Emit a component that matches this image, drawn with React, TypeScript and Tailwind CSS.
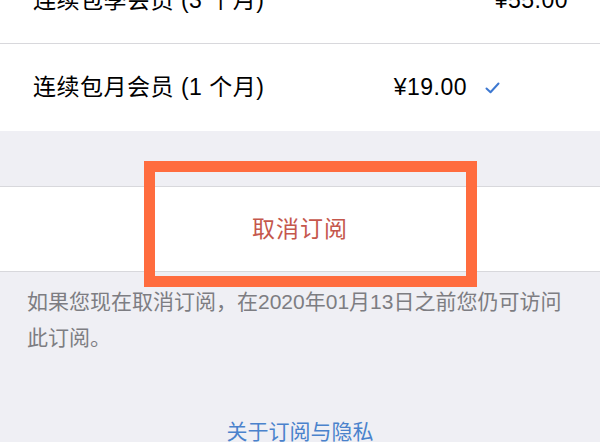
import React from 'react';

const FONT = "font-['Helvetica','Liberation_Sans','Noto_Sans_CJK_SC',sans-serif]";

function Check() {
  return (
    <svg width="15" height="12" viewBox="0 0 15 12" fill="none" className="ml-[18px]">
      <path d="M1.5 6.5 L5.5 10.2 L13.5 1.5" stroke="#3d78d1" strokeWidth="2" strokeLinecap="round" strokeLinejoin="round" />
    </svg>
  );
}

export default function App() {
  return (
    <div className={`relative w-[600px] h-[442px] overflow-hidden bg-[#efeff4] ${FONT}`}>
      {/* plan list, scrolled up a bit */}
      <div className="-mt-[43px] bg-white">
        <div className="h-[87px] flex items-center justify-between pl-[33px] pr-[32px] border-b border-[#d8d8dc] text-[23px] tracking-[0.5px] text-black">
          <span>连续包季会员 (3 个月)</span>
          <span>¥55.00</span>
        </div>
        <div className="h-[87px] flex items-center pl-[33px] pr-[100px] text-[23px] tracking-[0.5px] text-black">
          <span className="flex-1">连续包月会员 (1 个月)</span>
          <span>¥19.00</span>
          <Check />
        </div>
      </div>

      <div className="h-[55px]" />

      {/* cancel button */}
      <div className="h-[86px] bg-white border-y border-[#d8d8dc] flex items-center justify-center">
        <span className="text-[23px] text-[#c5574c] tracking-[1px]">取消订阅</span>
      </div>

      <p className="px-[27px] pt-[12px] text-[21px] leading-[36px] text-[#7d7d82]">
        如果您现在取消订阅，在2020年01月13日之前您仍可访问此订阅。
      </p>

      <div className="mt-[58px] text-center text-[21px] leading-[36px] text-[#4a82cc]">
        关于订阅与隐私
      </div>

      {/* highlight box */}
      <div className="absolute left-[144px] top-[161px] w-[333px] h-[126px] border-[11px] border-[#ff6c3e]" />
    </div>
  );
}
